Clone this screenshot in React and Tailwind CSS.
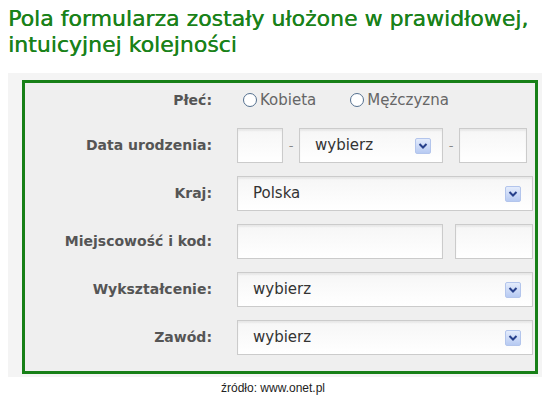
import React from 'react';

const font = { fontFamily: '"DejaVu Sans", Verdana, sans-serif' };

const Arrow = () => (
  <span className="flex h-[16px] w-[16px] items-center justify-center rounded-[2px] border border-[#b3c5ec] bg-gradient-to-b from-[#e4ecfc] to-[#b7caf2]">
    <svg width="10" height="8" viewBox="0 0 10 8">
      <path d="M1.5 2 L5 5.5 L8.5 2" fill="none" stroke="#27408b" strokeWidth="2" />
    </svg>
  </span>
);

const Box = ({ className = '', children }) => (
  <div
    className={`flex h-[35px] items-center border border-[#cbcbcb] bg-gradient-to-b from-[#f6f6f6] to-white shadow-[inset_0_2px_2px_rgba(0,0,0,0.06)] ${className}`}
  >
    {children}
  </div>
);

const Select = ({ value, className = '' }) => (
  <Box className={`justify-between pl-[15px] pr-[11px] ${className}`}>
    <span className="text-[15px] text-[#333]">{value}</span>
    <Arrow />
  </Box>
);

const Label = ({ children }) => (
  <div className="w-[187px] shrink-0 text-right text-[14px] font-bold text-[#555]">{children}</div>
);

const Radio = ({ label }) => (
  <div className="flex items-center gap-[3px]">
    <span className="h-[14px] w-[14px] rounded-full border-[1.5px] border-[#54708f] bg-white" />
    <span className="text-[15px] text-[#666]">{label}</span>
  </div>
);

export default function App() {
  return (
    <div className="h-[401px] w-[546px] overflow-hidden bg-white" style={font}>
      <h1 className="whitespace-nowrap px-[8px] pt-[6px] text-[22px] leading-[26px] font-normal text-[#1a821a] [text-shadow:0.4px_0_0_#1a821a]">
        Pola formularza zostały ułożone w prawidłowej,
        <br />
        intuicyjnej kolejności
      </h1>
      <div className="mx-[8px] mt-[15px] w-[534px] bg-[#f4f4f4] pt-[7px] pb-[3px] pl-[14px] pr-[4px]">
        <div className="border-[3px] border-[#178017] bg-[#efefef] pt-[7px] pr-[2px] pb-[16px]">
          <div className="flex h-[20px] items-center gap-[25px]">
            <Label>Płeć:</Label>
            <div className="flex items-center gap-[34px] pl-[6px]">
              <Radio label="Kobieta" />
              <Radio label="Mężczyzna" />
            </div>
          </div>
          <div className="mt-[18px] flex items-center gap-[25px]">
            <Label>Data urodzenia:</Label>
            <div className="flex items-center">
              <Box className="w-[46px]" />
              <span className="w-[16px] text-center text-[13px] text-[#888]">-</span>
              <Select value="wybierz" className="w-[144px]" />
              <span className="w-[16px] text-center text-[13px] text-[#888]">-</span>
              <Box className="w-[68px]" />
            </div>
          </div>
          <div className="mt-[13px] flex items-center gap-[25px]">
            <Label>Kraj:</Label>
            <Select value="Polska" className="flex-1" />
          </div>
          <div className="mt-[13px] flex items-center gap-[25px]">
            <Label>Miejscowość i kod:</Label>
            <div className="flex flex-1 gap-[12px]">
              <Box className="w-[206px]" />
              <Box className="flex-1" />
            </div>
          </div>
          <div className="mt-[13px] flex items-center gap-[25px]">
            <Label>Wykształcenie:</Label>
            <Select value="wybierz" className="flex-1" />
          </div>
          <div className="mt-[13px] flex items-center gap-[25px]">
            <Label>Zawód:</Label>
            <Select value="wybierz" className="flex-1" />
          </div>
        </div>
      </div>
      <div
        className="mt-[2px] text-center text-[12px] text-[#222]"
        style={{ fontFamily: '"Liberation Sans", Arial, sans-serif' }}
      >
        źródło: www.onet.pl
      </div>
    </div>
  );
}
